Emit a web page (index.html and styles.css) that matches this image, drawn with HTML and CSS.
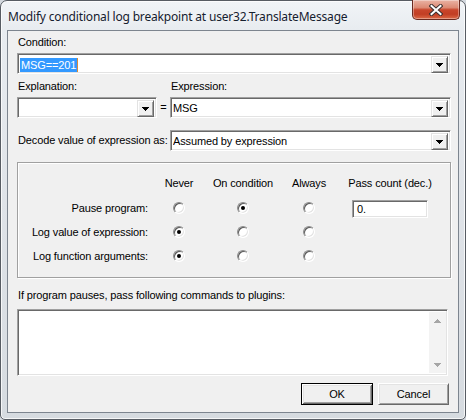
FILE: index.html
```html
<!DOCTYPE html>
<html>
<head>
<meta charset="utf-8">
<title>Modify conditional log breakpoint</title>
<link rel="stylesheet" href="styles.css">
</head>
<body>
<div class="window">
  <div class="titlebar">
    <span class="title">Modify conditional log breakpoint at user32.TranslateMessage</span>
    <div class="close">
      <svg width="14" height="12" viewBox="0 0 14 12"><path d="M2.5 2 L11.5 10 M11.5 2 L2.5 10" stroke="#3b3030" stroke-width="4" stroke-linecap="square" fill="none"/><path d="M2.5 2 L11.5 10 M11.5 2 L2.5 10" stroke="#ffffff" stroke-width="2" stroke-linecap="square" fill="none"/></svg>
    </div>
  </div>
  <div class="client">
    <div class="lbl l-cond">Condition:</div>
    <div class="combo c-cond">
      <div class="field"><span class="sel">MSG==201</span><span class="caret"></span></div>
      <div class="dd"><svg width="7" height="4" viewBox="0 0 7 4" shape-rendering="crispEdges"><path d="M0 0H7V1H6V2H5V3H4V4H3V3H2V2H1V1H0Z" fill="#000"/></svg></div>
    </div>
    <div class="row-labels">
      <div class="lbl l-expl">Explanation:</div>
      <div class="lbl l-expr">Expression:</div>
    </div>
    <div class="row-expl">
      <div class="combo c-expl">
        <div class="field"></div>
        <div class="dd"><svg width="7" height="4" viewBox="0 0 7 4" shape-rendering="crispEdges"><path d="M0 0H7V1H6V2H5V3H4V4H3V3H2V2H1V1H0Z" fill="#000"/></svg></div>
      </div>
      <span class="eq">=</span>
      <div class="combo c-expr">
        <div class="field">MSG</div>
        <div class="dd"><svg width="7" height="4" viewBox="0 0 7 4" shape-rendering="crispEdges"><path d="M0 0H7V1H6V2H5V3H4V4H3V3H2V2H1V1H0Z" fill="#000"/></svg></div>
      </div>
    </div>
    <div class="row-decode">
      <span class="lbl l-dec">Decode value of expression as:</span>
      <div class="combo c-dec">
        <div class="field">Assumed by expression</div>
        <div class="dd"><svg width="7" height="4" viewBox="0 0 7 4" shape-rendering="crispEdges"><path d="M0 0H7V1H6V2H5V3H4V4H3V3H2V2H1V1H0Z" fill="#000"/></svg></div>
      </div>
    </div>
    <div class="group">
      <div class="grid">
        <div></div>
        <div class="hd">Never</div>
        <div class="hd">On condition</div>
        <div class="hd">Always</div>
        <div class="hd">Pass count (dec.)</div>

        <div class="rl">Pause program:</div>
        <div class="rc"><span class="radio"></span></div>
        <div class="rc"><span class="radio on"></span></div>
        <div class="rc"><span class="radio"></span></div>
        <div class="rc"><div class="edit">0.</div></div>

        <div class="rl">Log value of expression:</div>
        <div class="rc"><span class="radio on"></span></div>
        <div class="rc"><span class="radio"></span></div>
        <div class="rc"><span class="radio"></span></div>
        <div></div>

        <div class="rl">Log function arguments:</div>
        <div class="rc"><span class="radio on"></span></div>
        <div class="rc"><span class="radio"></span></div>
        <div class="rc"><span class="radio"></span></div>
        <div></div>
      </div>
    </div>
    <div class="lbl l-plug">If program pauses, pass following commands to plugins:</div>
    <div class="memo">
      <div class="text"></div>
      <div class="sb">
        <span class="arr"><svg width="7" height="4" viewBox="0 0 7 4" shape-rendering="crispEdges"><path d="M3 0H4V1H5V2H6V3H7V4H0V3H1V2H2V1H3Z" fill="#a6a6a6"/></svg></span>
        <span class="arr"><svg width="7" height="4" viewBox="0 0 7 4" shape-rendering="crispEdges"><path d="M0 0H7V1H6V2H5V3H4V4H3V3H2V2H1V1H0Z" fill="#a6a6a6"/></svg></span>
      </div>
    </div>
    <div class="buttons">
      <div class="btn default">OK</div>
      <div class="btn cancel">Cancel</div>
    </div>
  </div>
</div>
</body>
</html>
```
FILE: styles.css
```css
* { box-sizing: border-box; }
html, body { margin: 0; padding: 0; }
body {
  width: 466px;
  height: 420px;
  overflow: hidden;
  background: #d3d8de;
  font-family: "Liberation Sans", Arial, sans-serif;
  font-size: 11px;
  color: #000;
}
.window {
  position: relative;
  width: 466px;
  height: 420px;
  border: 1px solid #575c63;
  border-radius: 7px 7px 5px 5px;
  background: linear-gradient(180deg, #f1f4f7 0px, #e8ecf0 28px, #dfe3e8 200px, #d6dbe0 100%);
  box-shadow: inset 0 0 0 1px rgba(255,255,255,0.75);
  padding: 0 6px 6px 6px;
  display: flex;
  flex-direction: column;
}
.titlebar {
  height: 29px;
  flex: none;
  display: flex;
  align-items: center;
  padding-left: 1px;
  padding-top: 1px;
}
.title {
  font-family: "Noto Sans", "Open Sans", sans-serif;
  font-size: 12px;
  color: #15202e;
  letter-spacing: -0.18px;
  text-shadow: 0 0 6px rgba(255,255,255,0.9);
}
.close {
  position: absolute;
  top: -1px;
  right: 5px;
  width: 48px;
  height: 20px;
  border: 1px solid #6a2a20;
  border-top: none;
  border-radius: 0 0 5px 5px;
  background: linear-gradient(180deg, #eab3a4 0%, #dc8a74 40%, #c8452b 52%, #c23e24 75%, #dc6a47 100%);
  box-shadow: inset 0 0 0 1px rgba(255,255,255,0.35);
  display: flex;
  align-items: center;
  justify-content: center;
}
.client {
  flex: 1;
  border: 1px solid #7d858f;
  background: #f0f0f0;
  padding: 0 7px 0 9px;
  display: flex;
  flex-direction: column;
  letter-spacing: -0.13px;
}
.lbl { line-height: 13px; height: 13px; white-space: nowrap; }
.l-cond { margin-top: 5px; padding-left: 1px; }
.combo {
  height: 21px;
  display: flex;
  background: #fff;
  border: 1px solid;
  border-color: #a0a0a0 #ffffff #ffffff #a0a0a0;
  box-shadow: inset 1px 1px 0 #696969, inset -1px -1px 0 #e3e3e3;
  padding: 2px;
}
.field {
  flex: 1;
  height: 17px;
  line-height: 17px;
  white-space: nowrap;
  overflow: hidden;
  display: flex;
  align-items: center;
}
.sel {
  display: inline-block;
  background: #3399ff;
  color: #fff;
  line-height: 14px;
  height: 14px;
  padding: 0 1px 0 1px;
}
.caret { display: inline-block; width: 1px; height: 14px; background: #d98a3a; }
.dd {
  width: 17px;
  height: 17px;
  flex: none;
  background: #f0f0f0;
  border: 1px solid;
  border-color: #e3e3e3 #696969 #696969 #e3e3e3;
  box-shadow: inset 1px 1px 0 #ffffff, inset -1px -1px 0 #a0a0a0;
  display: flex;
  align-items: center;
  justify-content: center;
  padding-top: 1px;
}
.dd svg { display: block; }
.c-cond { margin-top: 4px; }
.row-labels { margin-top: 6px; display: flex; }
.l-expl { width: 154px; padding-left: 1px; }
.l-expr { padding-left: 0; }
.row-expl { margin-top: 4px; display: flex; }
.c-expl { width: 140px; flex: none; }
.eq { width: 13px; flex: none; text-align: center; line-height: 21px; }
.c-expr { flex: 1; }
.row-decode { margin-top: 12px; display: flex; align-items: center; }
.l-dec { width: 153px; flex: none; padding-left: 1px; }
.c-dec { flex: 1; }
.group {
  margin-top: 11px;
  height: 116px;
  border: 1px solid #a0a0a0;
  box-shadow: inset 1px 1px 0 #ffffff, 1px 1px 0 #ffffff;
  padding-top: 8px;
}
.grid {
  display: grid;
  grid-template-columns: 132px 58px 70px 62px 100px;
  grid-template-rows: 24px 25px 23px 25px;
  align-items: center;
}
.hd { text-align: center; white-space: nowrap; }
.rl { text-align: right; padding-right: 2px; white-space: nowrap; }
.rc { display: flex; justify-content: center; align-items: center; }
.radio {
  width: 12px;
  height: 12px;
  border-radius: 50%;
  background: #fff;
  border: 1px solid;
  border-color: #8c8c8c #ffffff #ffffff #8c8c8c;
  box-shadow: inset 1px 1px 0 #5a5a5a, inset -1px -1px 0 #e3e3e3;
  position: relative;
  display: block;
}
.radio.on::after {
  content: "";
  position: absolute;
  left: 3px;
  top: 3px;
  width: 4px;
  height: 4px;
  border-radius: 50%;
  background: #000;
}
.edit {
  width: 76px;
  height: 18px;
  margin-top: 2px;
  background: #fff;
  border: 1px solid;
  border-color: #a0a0a0 #ffffff #ffffff #a0a0a0;
  box-shadow: inset 1px 1px 0 #696969, inset -1px -1px 0 #e3e3e3;
  padding-left: 4px;
  line-height: 16px;
}
.l-plug { margin-top: 11px; padding-left: 1px; }
.memo {
  margin-top: 7px;
  margin-right: 3px;
  height: 67px;
  display: flex;
  background: #fff;
  border: 1px solid;
  border-color: #a0a0a0 #ffffff #ffffff #a0a0a0;
  box-shadow: inset 1px 1px 0 #696969, inset -1px -1px 0 #e3e3e3;
  padding: 2px 1px 2px 2px;
}
.memo .text { flex: 1; }
.sb {
  width: 17px;
  flex: none;
  background: #f3f3f3;
  display: flex;
  flex-direction: column;
  justify-content: space-between;
}
.arr { height: 17px; display: flex; align-items: center; justify-content: center; }
.arr svg { display: block; }
.buttons {
  margin-top: 7px;
  margin-right: 2px;
  display: flex;
  justify-content: flex-end;
  gap: 5px;
}
.btn {
  height: 22px;
  background: #f0f0f0;
  border: 1px solid;
  border-color: #ffffff #696969 #696969 #ffffff;
  box-shadow: inset 1px 1px 0 #e3e3e3, inset -1px -1px 0 #a0a0a0;
  display: flex;
  align-items: center;
  justify-content: center;
}
.btn.default {
  width: 72px;
  border: 1px solid #000;
  box-shadow: inset 1px 1px 0 #ffffff, inset -1px -1px 0 #696969, inset 2px 2px 0 #e3e3e3, inset -2px -2px 0 #a0a0a0;
}
.btn.cancel { width: 71px; }
```
